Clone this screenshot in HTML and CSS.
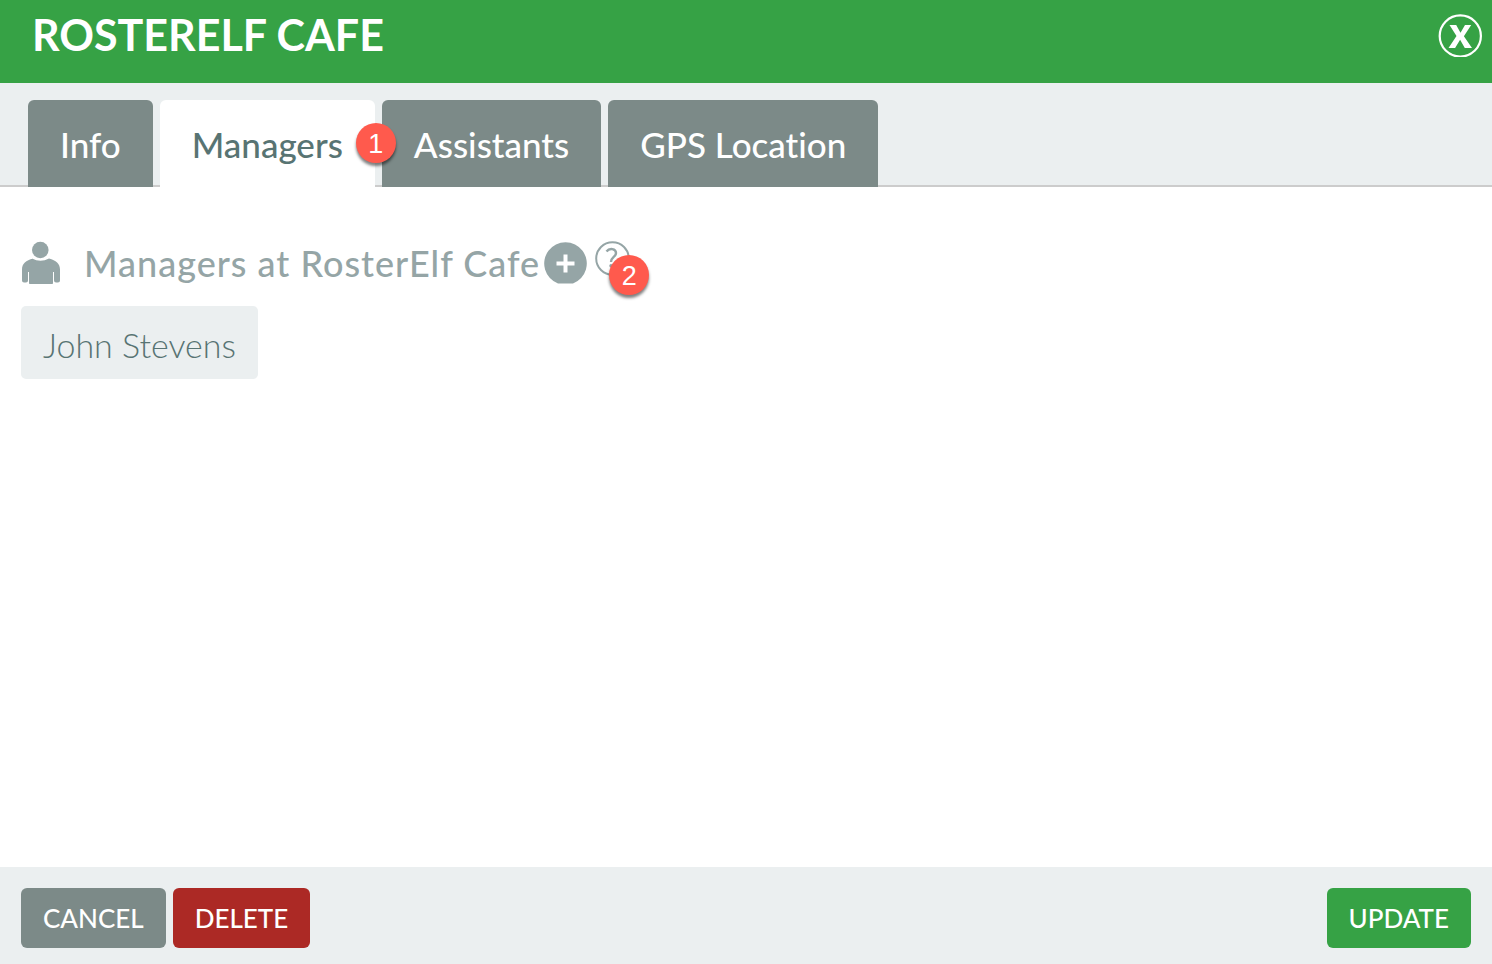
FILE: index.html
```html
<!DOCTYPE html>
<html lang="en">
<head>
    <meta charset="UTF-8">
    <meta name="viewport" content="width=device-width, initial-scale=1.0">
    <title>RosterElf Cafe</title>
    <link rel="stylesheet" href="styles.css">
</head>
<body>
    <div class="dialog">
        <header class="header">
            <h1>ROSTERELF CAFE</h1>
            <button class="icon-button" aria-label="Close">
                <svg width="44" height="43" viewBox="0 0 44 43">
                    <circle cx="22.3" cy="22" r="20.6" fill="none" stroke="#fff" stroke-width="2.2"/>
                    <path d="M11.500 11h6.700l4.300 7.700 4.500-7.700h6.200l-7.300 11.300L34 34h-7.200l-4.700-8.200-5 8.200h-6.600l8-12z" fill="#fff"/>
                </svg>
            </button>
        </header>

        <nav class="tabs">
            <button class="tab">Info</button>
            <button class="tab active">Managers<span class="marker marker-tab">1</span></button>
            <button class="tab">Assistants</button>
            <button class="tab">GPS Location</button>
        </nav>

        <main class="content">
            <div class="section-title">
                <svg class="person" width="39" height="43" viewBox="0 0 39 43" fill="#95a5a6">
                    <circle cx="19.3" cy="9" r="8.3"/>
                    <path d="M11 17.500q8.500 4.500 17 0c7 2 11 5 11 11v11q0 2-2 2h-2q-2 0-2-2v-8.500h-1v10.500q0 2.500-2.500 2.500h-19q-2.500 0-2.500-2.500v-10.500h-1v8.500q0 2-2 2h-2q-2 0-2-2v-11c0-6 4-9 11-11z"/>
                </svg>
                <h2>Managers at RosterElf Cafe</h2>
                <button class="icon-button" aria-label="Add manager">
                    <svg width="43" height="43" viewBox="0 0 43 43">
                        <path d="M14 42.500A21.300 21.300 0 1 1 29 42.500z" fill="#95a5a6"/>
                        <path d="M21.500 13.500v18M12.500 22.500h18" stroke="#fff" stroke-width="4"/>
                    </svg>
                </button>
                <button class="icon-button help" aria-label="Help">
                    <svg width="35" height="35" viewBox="0 0 35 35" fill="none" stroke="#95a5a6">
                        <circle cx="17.500" cy="17.500" r="16.300" stroke-width="2"/>
                        <path d="M11.500 10.500c3-4 9.500-3 9.500 1.500 0 4-5 4-5 9" stroke-width="2.400"/>
                        <circle cx="16" cy="24.800" r="1.700" fill="#95a5a6" stroke="none"/>
                    </svg>
                    <span class="marker marker-help">2</span>
                </button>
            </div>
            <ul class="people">
                <li>John Stevens</li>
            </ul>
        </main>

        <footer class="footer">
            <button class="btn">CANCEL</button>
            <button class="btn delete">DELETE</button>
            <button class="btn update">UPDATE</button>
        </footer>
    </div>
</body>
</html>
```
FILE: styles.css
```css
:root {
    --green: #36a245;
    --red: #ac2925;
    --grey: #7c8a88;
    --light: #ebeff0;
    --muted: #95a5a6;
    --text: #587473;
    --marker: #ff5a4d;
}

* {
    margin: 0;
    padding: 0;
    box-sizing: border-box;
}

body {
    font-family: Lato, sans-serif;
    font-size: 34px;
    font-variant-ligatures: none;
    color: var(--text);
    background-color: #fff;
}

button {
    border: none;
    font-family: inherit;
    font-weight: 500;
    font-variant-ligatures: none;
    cursor: pointer;
}

svg {
    display: block;
}

.dialog {
    display: flex;
    flex-direction: column;
    min-height: 100vh;
}

.header {
    display: flex;
    justify-content: space-between;
    align-items: flex-start;
    padding: 8px 10px 21px 32px;
    background-color: var(--green);
    color: #fff;
}

.header h1 {
    font-size: 43px;
    line-height: 54px;
    font-weight: 700;
}

.header .icon-button {
    margin-top: 6px;
}

.icon-button {
    flex: none;
    background: none;
}

.tabs {
    display: flex;
    gap: 7px;
    padding: 17px 28px 0;
    background: linear-gradient(#ccc, #ccc) bottom / 100% 2px no-repeat var(--light);
}

.tab {
    position: relative;
    padding: 22px 32px 21px;
    border-radius: 6px 6px 0 0;
    background-color: var(--grey);
    color: #fff;
    font-size: 35px;
    line-height: 44px;
}

.tab.active {
    background-color: #fff;
    color: var(--text);
}

.marker {
    position: absolute;
    z-index: 1;
    width: 40px;
    height: 40px;
    border-radius: 50%;
    background-color: var(--marker);
    box-shadow: 0 3px 3px rgba(0, 0, 0, 0.5);
    color: #fff;
    font-family: "Liberation Sans", Arial, sans-serif;
    font-size: 27px;
    line-height: 42px;
    text-align: center;
}

.marker-tab {
    top: 23px;
    right: -21px;
}

.marker-help {
    top: 14px;
    left: 14px;
}

.content {
    flex: 1;
    padding: 54px 21px;
}

.section-title {
    display: flex;
    align-items: flex-start;
    color: var(--muted);
}

.section-title h2 {
    margin: 0 4px 0 24px;
    font-size: 36px;
    line-height: 44px;
    font-weight: 500;
    letter-spacing: 1px;
}

.help {
    position: relative;
    margin-left: 8px;
}

.people {
    display: flex;
    flex-wrap: wrap;
    gap: 8px;
    margin-top: 21px;
    list-style: none;
}

.people li {
    padding: 17px 22px 12px;
    border-radius: 5px;
    background-color: var(--light);
    font-weight: 300;
    line-height: 44px;
}

.footer {
    display: flex;
    gap: 7px;
    padding: 21px 21px 16px;
    background-color: var(--light);
}

.btn {
    padding: 14px 22px;
    border-radius: 6px;
    background-color: var(--grey);
    color: #fff;
    font-size: 26px;
    line-height: 32px;
}

.delete {
    background-color: var(--red);
}

.update {
    margin-left: auto;
    background-color: var(--green);
}
```
